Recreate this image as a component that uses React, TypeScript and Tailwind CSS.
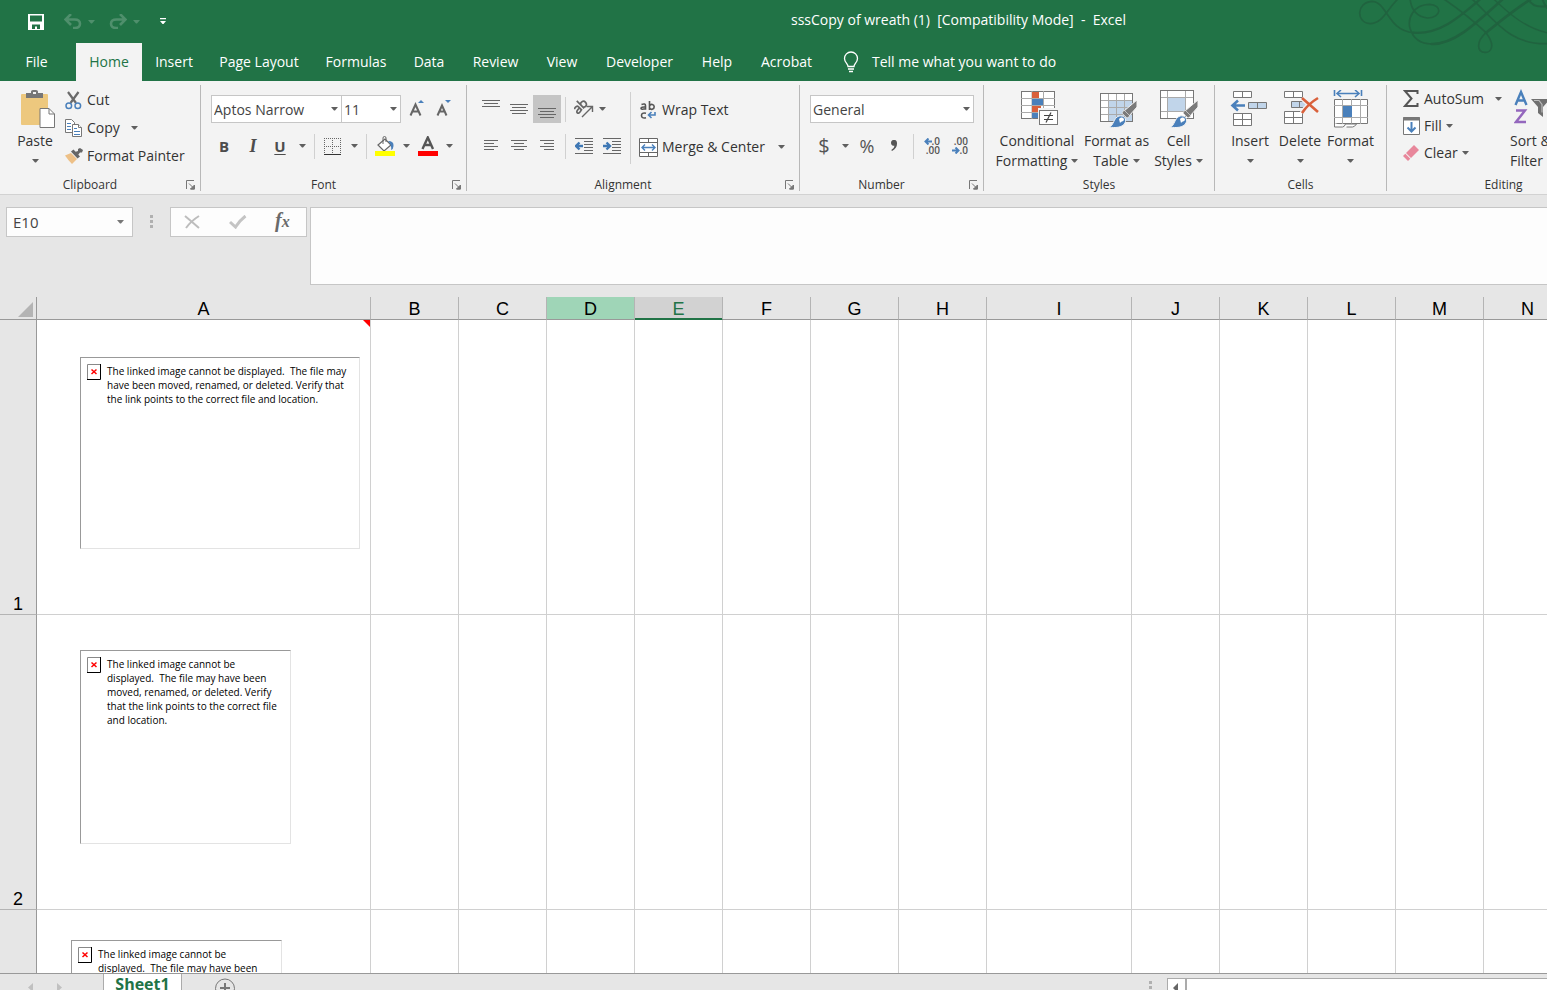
import type { ReactNode } from "react";

const SANS = "font-['Open_Sans','Noto_Sans',sans-serif]";

function Caret({ className = "text-[#5f5f5f]" }: { className?: string }) {
  return (
    <svg className={className} width="7" height="4" viewBox="0 0 7 4" aria-hidden="true">
      <path d="M0 0h7L4 3.5H3z" fill="currentColor" />
    </svg>
  );
}

function IconButton({ label, className, children }: { label: string; className: string; children: ReactNode }) {
  return (
    <button type="button" aria-label={label} className={"flex h-7 shrink-0 items-center justify-center " + className}>
      {children}
    </button>
  );
}

function Divider({ className = "" }: { className?: string }) {
  return <div className={"h-[25px] w-px shrink-0 bg-[#d0d0d0] " + className} />;
}

function Group({ title, width, launcher = false, children }: { title: string; width: string; launcher?: boolean; children: ReactNode }) {
  return (
    <section aria-label={title} className={"flex h-[106px] shrink-0 flex-col border-r border-[#b8b8b8] " + width}>
      <div className="h-[91px] shrink-0">{children}</div>
      <div className="flex h-[18px] shrink-0 items-center">
        <span className={"flex-1 text-center text-xs leading-[18px] text-[#333] " + (launcher ? "pr-[5px]" : "")}>{title}</span>
        {launcher && (
          <button type="button" aria-label={title + " settings"} className="mr-[4px]">
            <svg width="11" height="10" viewBox="0 0 11 10" fill="none" stroke="#777">
              <path d="M1.5 9V.5H9M4 3.5l4 4M9.5 5v4H5.5" />
              <path d="M9.5 5v4h-4z" fill="#777" />
            </svg>
          </button>
        )}
      </div>
    </section>
  );
}

function Dropdown({ label, value, width, height = "h-7" }: { label: string; value: string; width: string; height?: string }) {
  return (
    <label className={"relative flex shrink-0 items-center " + width + " " + height}>
      <select aria-label={label} className="h-full w-full appearance-none border border-[#c6c6c6] bg-white pl-[2px] pt-[2px] text-sm text-[#444] outline-none">
        <option>{value}</option>
      </select>
      <span className="pointer-events-none absolute right-[4px]">
        <Caret />
      </span>
    </label>
  );
}

function BigButton({ icon, lines, width, caret }: { icon: ReactNode; lines: string[]; width: string; caret: "inline" | "below" | "none" }) {
  return (
    <button type="button" className={"flex shrink-0 flex-col items-center pt-[4px] text-sm leading-5 text-[#333] " + width}>
      <span className="mb-[3px] flex h-[39px] items-center">{icon}</span>
      {lines.map((line, i) => (
        <span key={line} className="flex items-center gap-1 whitespace-nowrap">
          {line}
          {caret === "inline" && i === lines.length - 1 && <Caret />}
        </span>
      ))}
      {caret === "below" && (
        <span className="flex h-5 items-center">
          <Caret />
        </span>
      )}
    </button>
  );
}

function SmallButton({ icon, text, caret, height = "h-7", gap = "gap-1" }: { icon: ReactNode; text: string; caret?: string; height?: string; gap?: string }) {
  return (
    <button type="button" className={"flex items-center whitespace-nowrap text-sm text-[#333] " + height + " " + gap}>
      <span className="flex w-[18px] justify-center">{icon}</span>
      {text}
      {caret && (
        <span className={caret}>
          <Caret />
        </span>
      )}
    </button>
  );
}

function TextLines({ spans }: { spans: [number, number, number][] }) {
  return (
    <svg width="18" height="18" viewBox="0 0 18 18" stroke="#666" shapeRendering="crispEdges">
      {spans.map(([x1, x2, y]) => (
        <path key={y} d={`M${x1} ${y + 0.5}H${x2}`} />
      ))}
    </svg>
  );
}

function Indent({ right = false }: { right?: boolean }) {
  return (
    <svg width="18" height="18" viewBox="0 0 18 18" stroke="#666">
      <path d="M0 1.5h18M9 4.5h9M9 7.5h9M9 10.5h9M9 13.5h9M0 16.5h18" shapeRendering="crispEdges" />
      <path
        d={right ? "M0 9h6M3.5 5.5L7 9l-3.5 3.5" : "M8 9H2M4.500 5.500L1 9l3.500 3.500"}
        stroke="#3f78b5"
        strokeWidth="2.400"
        fill="none"
      />
    </svg>
  );
}

function Brush() {
  return (
    <>
      <path d="M38 10v7l-8 9-5-5z" fill="#7a7a7a" stroke="#f3f3f3" />
      <path d="M25 20l6 6-3 2-5-5z" fill="#7a7a7a" stroke="#f3f3f3" strokeWidth=".6" />
      <path d="M10 37c5-1 4-9 10-11 5-1 8 3 6 7-3 5-10 5-16 4z" fill="#4a80bb" stroke="#f3f3f3" />
      <path d="M20 29c3-3 5-1 5 1-1 2-3 1-4 3" fill="#fff" />
    </>
  );
}

const pasteIcon = (
  <svg width="42" height="38" viewBox="-6 0 42 38">
    <rect x="1" y="4" width="27" height="31" rx="1" fill="#edc87e" />
    <path d="M6 8V3h5V1.500Q11 0 13 0h3q2 0 2 1.500V3h5v5z" fill="#777" />
    <rect x="13" y="2" width="3" height="2" fill="#f3f3f3" />
    <path d="M20 18.500h9l5.500 5.500v13.500H20z" fill="#fff" stroke="#777" />
    <path d="M29 18.500V24h5.500" fill="none" stroke="#777" />
  </svg>
);

const cutIcon = (
  <svg width="19" height="19" viewBox="0 0 19 19" fill="none" className="shrink-0">
    <path d="M3 1l8 11M13.500 1l-8 11" stroke="#6a6a6a" strokeWidth="2.200" />
    <circle cx="3.800" cy="14.800" r="2.800" stroke="#4a80bb" strokeWidth="1.500" />
    <circle cx="12.800" cy="14.800" r="2.800" stroke="#4a80bb" strokeWidth="1.500" />
  </svg>
);

const copyIcon = (
  <svg width="18" height="19" viewBox="0 0 18 19" fill="#fff" stroke="#777">
    <path d="M.5.500h6l3 3v10h-9z" />
    <path d="M2 4.500h4M2 7.500h4M2 10.500h4" stroke="#4a80bb" />
    <path d="M7.500 5.500h6l3 3v9h-9z" />
    <path d="M13.500 5.500v3h3" />
    <path d="M9 9.500h3M9 12.500h6M9 15.500h6" stroke="#4a80bb" />
  </svg>
);

const painterIcon = (
  <svg width="18" height="16" viewBox="0 0 18 16">
    <path d="M0 7.500l6-2.500 6 6-5 5q-4-4-7-8.500z" fill="#edc087" />
    <path d="M6 3.500l2.500-2 6.500 7-2.500 2z" fill="#666" />
    <path d="M10 4l3-1V1l2-1 3 2-1 2.500h-2L13 7z" fill="#666" />
  </svg>
);

const conditionalIcon = (
  <svg width="44" height="35" viewBox="-6 0 44 35">
    <rect x=".5" y=".5" width="33" height="27" fill="#fff" stroke="#777" />
    <path d="M11 0v28M22.500 0v28M0 7.500h34M0 14.500h34M0 21.500h34" stroke="#aaa" />
    <path d="M11 1h7v6h-7zM11 15h9v6h-9z" fill="#d9603b" />
    <path d="M11 8h11v6H11zM11 22h6v5h-6z" fill="#4a80bb" />
    <rect x="17" y="17" width="21" height="18" fill="#f3f3f3" />
    <rect x="18.500" y="19.500" width="18" height="14" fill="#fff" stroke="#777" />
    <path d="M23 24.500h9M23 28.500h9M30 21.500l-5 10" stroke="#444" strokeWidth="1.200" />
  </svg>
);

const tableIcon = (
  <svg width="40" height="38" viewBox="-2 0 40 38">
    <rect x="1" y="3.500" width="32" height="28" fill="#fff" />
    <path d="M9 11h24v21H9z" fill="#c1d5ea" />
    <path d="M9.500 3v29M17.500 3v29M25.500 3v29M1 10.500h32M1 17.500h32M1 24.500h32" stroke="#aaa" />
    <rect x="1.500" y="3.500" width="32" height="28" fill="none" stroke="#777" />
    <Brush />
  </svg>
);

const cellStylesIcon = (
  <svg width="38" height="38" viewBox="0 0 38 38">
    <rect x=".5" y=".5" width="33" height="28" fill="#fff" />
    <path d="M7.500 7h18v14h-18z" fill="#c1d5ea" />
    <path d="M7.500 0v28M25.500 0v28M0 7.500h34M0 21.500h34" stroke="#aaa" />
    <rect x=".5" y=".5" width="33" height="28" fill="none" stroke="#777" />
    <Brush />
  </svg>
);

const insertIcon = (
  <svg width="40" height="38" viewBox="0 0 40 38" fill="#fff" stroke="#777">
    <path d="M3.500 1.500h18v6h-18zM12.500 1.500v6" />
    <path d="M18.500 12.500h18v6h-18z" fill="#c1d5ea" />
    <path d="M27.500 12.500v6" />
    <path d="M3.500 23.500h18v12h-18zM12.500 23.500v12M3.500 29.500h18" />
    <path d="M15 15.500H3M8 10.500l-5.500 5 5.500 5" stroke="#4a80bb" strokeWidth="2.600" fill="none" />
  </svg>
);

const deleteIcon = (
  <svg width="37" height="38" viewBox="-1 0 37 38" fill="#fff" stroke="#777">
    <path d="M1.500 1.500h18v6h-18zM10.500 1.500v6" />
    <path d="M8.500 11.500h12l3 3-3 3h-12z" fill="#c1d5ea" />
    <path d="M16.500 11.500v6" />
    <path d="M1.500 21.500h18v12h-18zM10.500 21.500v12M1.500 27.500h18" />
    <path d="M19 8l16 14M35 8q-10 6-16 15" stroke="#f3f3f3" strokeWidth="5" fill="none" />
    <path d="M19 8l16 14M35 8q-10 6-16 15" stroke="#d9603b" strokeWidth="2.600" fill="none" />
  </svg>
);

const formatIcon = (
  <svg width="36" height="38" viewBox="0 0 36 38" fill="none" stroke="#777">
    <path d="M1.500 0v6M28.500 0v6M5 3.500h20" stroke="#4a80bb" strokeWidth="1.600" />
    <path d="M8 0L4 3.500 8 7M22 0l4 3.500L22 7" stroke="#4a80bb" strokeWidth="1.600" />
    <path d="M1.500 9.500h33v24h-33z" fill="#fff" />
    <path d="M9.500 9v25M18.500 9v25M27.500 9v25M1 15.500h34M1 27.500h34" stroke="#aaa" />
    <path d="M10 16h9v11h-9z" fill="#4a80bb" stroke="none" />
    <path d="M1.500 33v4h8q2 0 3-3h11q-2 3-4 3h-6" fill="#fff" />
  </svg>
);

const tabs: [string, string][] = [
  ["Insert", "w-[64px]"],
  ["Page Layout", "w-[106px]"],
  ["Formulas", "w-[88px]"],
  ["Data", "w-[58px]"],
  ["Review", "w-[75px]"],
  ["View", "w-[58px]"],
  ["Developer", "w-[97px]"],
  ["Help", "w-[58px]"],
  ["Acrobat", "w-[81px]"],
];

function TitleBar() {
  return (
    <header className="relative flex h-[43px] shrink-0 items-center">
      <svg className="absolute right-0 top-0" width="189" height="54" viewBox="174 0 567 162" fill="none" stroke="#20633f" strokeLinecap="round" aria-hidden="true">
        <path d="M295 -4C262 25 250 70 210 71C168 68 168 8 215 4C262 4 262 92 340 98" strokeWidth="5" />
        <path d="M340 98C420 104 480 50 545 -6" strokeWidth="7" />
        <path d="M330 -4C334 32 350 50 382 54C425 54 428 14 388 13C340 14 322 55 330 85C340 118 365 132 395 132" strokeWidth="5" />
        <path d="M395 132C460 134 520 78 612 -6" strokeWidth="8" />
        <path d="M430 -4C480 30 520 62 558 98C590 140 570 158 555 157C530 156 528 125 558 98" strokeWidth="5" />
        <path d="M558 98C600 64 640 30 695 -4" strokeWidth="8" />
        <path d="M515 -4C590 66 630 134 741 131" strokeWidth="5" />
        <path d="M580 -4C630 44 680 86 745 99" strokeWidth="4" />
        <path d="M685 -2Q700 26 741 18M728 0Q733 14 741 24" strokeWidth="6" />
      </svg>
      <div className="flex w-[180px] shrink-0 items-center">
        <button type="button" aria-label="Save" className="ml-[28px]">
          <svg width="16" height="16" viewBox="0 0 16 16">
            <path fillRule="evenodd" d="M0 0h16v16H0zM2 1.500v6h12v-6zM4 10.500V15h3v-2.500h2V15h3v-4.500z" fill="#fff" />
          </svg>
        </button>
        <button type="button" aria-label="Undo" className="ml-5 flex items-center gap-[6px]">
          <svg width="18" height="15" viewBox="0 0 18 15" fill="none" stroke="#4f8f6c" strokeWidth="2.600">
            <path d="M1.500 5.500h9q5.500 0 5.500 4.300T10.500 14H9M7 0L1.500 5.500 7 11" />
          </svg>
          <Caret className="text-[#4f8f6c]" />
        </button>
        <button type="button" aria-label="Redo" className="ml-[14px] flex items-center gap-[6px]">
          <svg width="18" height="15" viewBox="0 0 18 15" fill="none" stroke="#4f8f6c" strokeWidth="2.600">
            <path d="M16.500 5.500h-9Q2 5.500 2 9.800T7.500 14H9M11 0l5.500 5.500L11 11" />
          </svg>
          <Caret className="text-[#4f8f6c]" />
        </button>
        <button type="button" aria-label="Customize Quick Access Toolbar" className="ml-5">
          <svg width="6" height="7" viewBox="0 0 6 7">
            <path d="M0 0h6v1.200H0zM0 3h6L3.500 6h-1z" fill="#fff" />
          </svg>
        </button>
      </div>
      <h1 className="flex-1 whitespace-pre pb-[3px] pl-[190px] text-center text-sm text-white">
        {"sssCopy of wreath (1)  [Compatibility Mode]  -  Excel"}
      </h1>
    </header>
  );
}

function TabBar() {
  return (
    <nav aria-label="Ribbon tabs" className="relative flex h-[38px] shrink-0 text-sm text-white">
      <button type="button" className="mr-[3px] w-[73px] shrink-0">File</button>
      <button type="button" className="w-[66px] shrink-0 bg-[#f3f3f3] text-[#217346]">Home</button>
      {tabs.map(([name, width]) => (
        <button key={name} type="button" className={"shrink-0 whitespace-nowrap " + width}>
          {name}
        </button>
      ))}
      <button type="button" className="ml-4 flex items-center gap-[13px] whitespace-nowrap">
        <svg width="16" height="22" viewBox="0 0 16 22" fill="none" stroke="#fff" strokeWidth="1.300">
          <path d="M5 15.500c0-3-3.500-4-3.500-8a6.500 6.500 0 0113 0c0 4-3.500 5-3.500 8zM5 18h6M6 20.500h4" />
        </svg>
        Tell me what you want to do
      </button>
    </nav>
  );
}

function Ribbon() {
  return (
    <div className="flex h-[114px] shrink-0 overflow-hidden border-b border-[#d2d2d2] bg-[#f3f3f3] pt-1">
      <Group title="Clipboard" width="w-[201px]" launcher>
        <div className="flex">
          <div className="ml-[9px] flex">
            <BigButton icon={pasteIcon} lines={["Paste"]} width="w-[52px]" caret="below" />
          </div>
          <div className="ml-1 flex flex-col items-start pt-px">
            <SmallButton icon={cutIcon} text="Cut" />
            <SmallButton icon={copyIcon} text="Copy" caret="ml-[7px]" />
            <SmallButton icon={painterIcon} text="Format Painter" />
          </div>
        </div>
      </Group>

      <Group title="Font" width="w-[266px]" launcher>
        <div className="flex flex-col gap-[9px] pl-[9px] pt-[10px]">
          <div className="flex">
            <div className="ml-px flex">
              <Dropdown label="Font name" value="Aptos Narrow" width="w-[131px]" />
              <div className="-ml-px flex">
                <Dropdown label="Font size" value="11" width="w-[60px]" />
              </div>
            </div>
            <IconButton label="Increase font size" className="ml-[3px] w-[26px]">
              <svg width="16" height="18" viewBox="0 0 16 18" aria-hidden="true">
                <path d="M1.500 15.500L6.500 4.500l5 11M3.500 11.500h6.500" fill="none" stroke="#666" strokeWidth="2" />
                <path d="M9 3l3-3 3 3z" fill="#4a80bb" />
              </svg>
            </IconButton>
            <IconButton label="Decrease font size" className="w-7">
              <svg width="16" height="18" viewBox="0 0 16 18" aria-hidden="true">
                <path d="M1.500 15.500L6 5.500l4.500 10M3.500 11.500H9" fill="none" stroke="#666" strokeWidth="2" />
                <path d="M9 0h6l-3 3z" fill="#4a80bb" />
              </svg>
            </IconButton>
          </div>
          <div className="flex items-center text-[#4d4d4d]">
            <IconButton label="Bold" className="w-7 text-[15px] font-bold">B</IconButton>
            <IconButton label="Italic" className="ml-px w-7 font-['Liberation_Serif',serif] text-lg font-bold italic">I</IconButton>
            <IconButton label="Underline" className="ml-px w-6 text-[15px] font-bold underline underline-offset-2">U</IconButton>
            <IconButton label="Underline options" className="w-5"><Caret /></IconButton>
            <Divider className="ml-[2px]" />
            <IconButton label="Borders" className="ml-[6px] w-[22px]">
              <svg width="17" height="17" viewBox="0 0 17 17" stroke="#666" shapeRendering="crispEdges">
                <path d="M0 .5h17M0 8.500h17M.5 0v17M8.500 0v17M16.500 0v17" strokeDasharray="1 1" />
                <path d="M0 16.500h17" stroke="#333" />
              </svg>
            </IconButton>
            <IconButton label="Border options" className="ml-px w-5"><Caret /></IconButton>
            <Divider className="ml-[2px]" />
            <IconButton label="Fill color" className="ml-[7px] w-[22px]">
              <svg width="20" height="20" viewBox="0 0 20 20">
                <path d="M3 9l7-6 6 6-7 6z" fill="#fff" stroke="#666" strokeWidth="1.200" />
                <path d="M8 8V2q0-1.500 1.500-1.500T11 2v4" fill="none" stroke="#666" />
                <path d="M13 5q6 0 5.500 5 0 3-2.500 4 1-5-3-9z" fill="#4a80bb" />
                <path d="M0 15h20v5H0z" fill="#ff0" />
              </svg>
            </IconButton>
            <IconButton label="Fill color options" className="ml-px w-[18px]"><Caret /></IconButton>
            <IconButton label="Font color" className="ml-px w-6">
              <svg width="20" height="20" viewBox="0 0 20 20">
                <path d="M4.500 13L9.800 1.500 15 13M6.500 9h6.500" fill="none" stroke="#555" strokeWidth="2.400" />
                <path d="M0 15h20v5H0z" fill="#f00" />
              </svg>
            </IconButton>
            <IconButton label="Font color options" className="w-[18px]"><Caret /></IconButton>
          </div>
        </div>
      </Group>

      <Group title="Alignment" width="w-[333px]" launcher>
        <div className="flex">
          <div className="flex flex-col gap-[9px] pl-[10px] pt-[10px]">
            <div className="flex items-center">
              <IconButton label="Top align" className="w-7"><TextLines spans={[[0, 18, 0], [2, 16, 3], [0, 18, 6]]} /></IconButton>
              <IconButton label="Middle align" className="w-7"><TextLines spans={[[0, 18, 4], [2, 16, 7], [0, 18, 10], [2, 16, 13]]} /></IconButton>
              <IconButton label="Bottom align" className="w-7 bg-[#c5c5c5]"><TextLines spans={[[0, 18, 8], [2, 16, 11], [0, 18, 14], [2, 16, 17]]} /></IconButton>
              <Divider className="ml-1" />
              <IconButton label="Orientation" className="ml-2 w-8 gap-[5px]">
                <svg width="20" height="20" viewBox="0 0 20 20" fill="none" stroke="#666" strokeWidth="1.700">
                  <g transform="rotate(-45 7 9)">
                    <path d="M1.500 5q4.500-1.500 4.500 1.500v5M6 8q-5-.5-5 1.800t5 .7M9 1v10.500M9 7q1-2.500 3.200-1.800t2 3-2 2.800-3.200-1.500" />
                  </g>
                  <path d="M8 18L18 8M12.500 7.500H18.500V13" strokeWidth="1.400" />
                </svg>
                <Caret />
              </IconButton>
            </div>
            <div className="flex items-center">
              <IconButton label="Align left" className="w-7"><TextLines spans={[[2, 16, 3], [2, 12, 6], [2, 16, 9], [2, 12, 12]]} /></IconButton>
              <IconButton label="Center" className="w-7"><TextLines spans={[[1, 17, 3], [4, 14, 6], [1, 17, 9], [4, 14, 12]]} /></IconButton>
              <IconButton label="Align right" className="w-7"><TextLines spans={[[2, 16, 3], [6, 16, 6], [2, 16, 9], [6, 16, 12]]} /></IconButton>
              <Divider className="ml-1" />
              <IconButton label="Decrease indent" className="ml-1 w-7"><Indent /></IconButton>
              <IconButton label="Increase indent" className="w-7"><Indent right /></IconButton>
            </div>
          </div>
          <div className="ml-[4px] mt-[7px] h-[72px] w-px bg-[#d0d0d0]" />
          <div className="flex flex-col items-start gap-[9px] pl-2 pt-[11px]">
            <SmallButton
              gap="gap-[5px]"
              text="Wrap Text"
              icon={
                <svg width="16" height="19" viewBox="0 0 16 19" fill="none" stroke="#555" strokeWidth="1.600">
                  <path d="M1.500 3.500q4-1.500 4 1.300v4M5.500 6Q1 5.700 1 7.300t4.500.5M9.500 0v9M9.500 5q1-2 2.800-1.500t1.900 2.300-1.900 2.400-2.800-1.500M6 12.300q-4.500-1-4.500 2.200t4.500 2.200" />
                  <path d="M15 11v3H9M11.500 11l-3 3 3 3" stroke="#4a80bb" />
                </svg>
              }
            />
            <SmallButton
              gap="gap-[5px]"
              text="Merge & Center"
              caret="ml-2"
              icon={
                <svg width="19" height="19" viewBox="0 0 19 19" fill="#fff" stroke="#666" className="shrink-0">
                  <path d="M.5.500h18v18H.5zM9.500 0v5M9.500 14v5M.5 4.500h18M.5 14.500h18" />
                  <path d="M3 9.500h13M6 6.500l-3 3 3 3M13 6.500l3 3-3 3" fill="none" stroke="#4a80bb" strokeWidth="1.400" />
                </svg>
              }
            />
          </div>
        </div>
      </Group>

      <Group title="Number" width="w-[184px]" launcher>
        <div className="flex flex-col gap-[9px] pl-[10px] pt-[10px]">
          <Dropdown label="Number format" value="General" width="w-[164px]" />
          <div className="flex items-center text-[#555]">
            <IconButton label="Accounting format" className="w-7 text-xl">$</IconButton>
            <IconButton label="Currency options" className="w-[14px]"><Caret /></IconButton>
            <IconButton label="Percent style" className="ml-px w-7 text-lg">%</IconButton>
            <IconButton label="Comma style" className="w-[26px]">
              <svg width="8" height="12" viewBox="0 0 8 12">
                <path d="M1 3a3 3 0 016-.3Q7.500 8 2 11l-.7-1Q4.500 8 4.500 5.800 1.200 6 1 3z" fill="#555" />
              </svg>
            </IconButton>
            <Divider className="ml-[6px]" />
            <IconButton label="Increase decimal" className="ml-[4px] w-7">
              <span className="flex w-[16px] flex-col items-end text-[10px] font-semibold leading-[9px]">
                <span className="flex items-center">
                  <svg width="8" height="7" viewBox="0 0 8 7" fill="none" stroke="#4a80bb" strokeWidth="2"><path d="M8 3.500H2M4.500.500l-3 3 3 3" /></svg>
                  .0
                </span>
                <span>.00</span>
              </span>
            </IconButton>
            <IconButton label="Decrease decimal" className="w-7">
              <span className="flex w-[16px] flex-col items-end text-[10px] font-semibold leading-[9px]">
                <span>.00</span>
                <span className="flex items-center">
                  <svg width="8" height="7" viewBox="0 0 8 7" fill="none" stroke="#4a80bb" strokeWidth="2"><path d="M0 3.500h6M3.500.500l3 3-3 3" /></svg>
                  .0
                </span>
              </span>
            </IconButton>
          </div>
        </div>
      </Group>

      <Group title="Styles" width="w-[231px]">
        <div className="flex pl-[9px]">
          <BigButton icon={conditionalIcon} lines={["Conditional", "Formatting"]} width="w-[88px]" caret="inline" />
          <BigButton icon={tableIcon} lines={["Format as", "Table"]} width="w-[71px]" caret="inline" />
          <BigButton icon={cellStylesIcon} lines={["Cell", "Styles"]} width="w-[53px]" caret="inline" />
        </div>
      </Group>

      <Group title="Cells" width="w-[172px]">
        <div className="flex pl-[10px]">
          <BigButton icon={insertIcon} lines={["Insert"]} width="w-[50px]" caret="below" />
          <BigButton icon={deleteIcon} lines={["Delete"]} width="w-[50px]" caret="below" />
          <BigButton icon={formatIcon} lines={["Format"]} width="w-[51px]" caret="below" />
        </div>
      </Group>

      <Group title="Editing" width="w-[234px]">
        <div className="flex">
          <div className="flex w-[118px] shrink-0 flex-col items-start pl-[15px]">
            <SmallButton
              height="h-[27px]"
              text="AutoSum"
              caret="ml-[7px]"
              icon={
                <svg width="16" height="17" viewBox="0 0 16 17" fill="none" stroke="#555" strokeWidth="2">
                  <path d="M14.500 4V1H2l6.500 7.500L2 16h12.500v-3" />
                </svg>
              }
            />
            <SmallButton
              height="h-[27px]"
              text="Fill"
              caret="ml-0"
              icon={
                <svg width="17" height="18" viewBox="0 0 17 18" fill="#fff" stroke="#777">
                  <path d="M.5.500h16v17H.5z" />
                  <path d="M0 2h17" strokeWidth="3" />
                  <path d="M8.500 5v9M4.500 10.500l4 4 4-4" fill="none" stroke="#4a80bb" strokeWidth="2" />
                </svg>
              }
            />
            <SmallButton
              height="h-[27px]"
              text="Clear"
              caret="ml-0"
              icon={
                <svg width="16" height="16" viewBox="0 0 16 16">
                  <path d="M11 0l5 5-8 8-5-5z" fill="#e8879b" />
                  <path d="M2.300 8.700l5 5L5 16 0 11z" fill="#e8879b" />
                </svg>
              }
            />
          </div>
          <button type="button" aria-label="Sort & Filter" className="flex shrink-0 flex-col items-start pl-[5px] pt-[4px] text-sm leading-5 text-[#333]">
            <svg className="mb-[3px] ml-[4px]" width="40" height="39" viewBox="0 0 40 39" fill="none" strokeWidth="2.400">
              <path d="M1.500 16L7 3l5.500 13M3.500 11.500h7" stroke="#4a80bb" />
              <path d="M2 21.500h9L2 33h10" stroke="#9467bd" />
              <path d="M17 10h19l-7 8v10l-5-4v-6z" fill="#6f6f6f" />
              <path d="M20 11.500h5l3 4v8" stroke="#bbb" strokeWidth="1.200" />
            </svg>
            <span>Sort &amp;</span>
            <span>Filter</span>
          </button>
        </div>
      </Group>
    </div>
  );
}

function FormulaBar() {
  return (
    <div className="flex h-[102px] shrink-0 items-start overflow-hidden pl-[6px] pt-3">
      <div className="flex h-[30px] w-[127px] shrink-0 items-center border border-[#c6c6c6] bg-[#fdfdfd]">
        <input aria-label="Name box" defaultValue="E10" className="w-[100px] bg-transparent pl-[6px] text-[15px] text-[#444] outline-none" />
        <button type="button" aria-label="Name list" className="ml-[10px]">
          <Caret className="text-[#777]" />
        </button>
      </div>
      <svg className="ml-[16px] mt-2 shrink-0" width="5" height="14" viewBox="0 0 5 14" fill="#b0b0b0">
        <path d="M1 0h3v3H1zM1 5h3v3H1zM1 10h3v3H1z" />
      </svg>
      <div className="ml-[16px] flex h-[30px] w-[137px] shrink-0 items-center border border-[#c6c6c6] bg-[#fdfdfd]">
        <button type="button" aria-label="Cancel" className="ml-[13px]">
          <svg width="17" height="14" viewBox="0 0 17 14" fill="none" stroke="#bdbdbd" strokeWidth="2">
            <path d="M1 1q6 5 14 12M15 1Q7 6 2 13" />
          </svg>
        </button>
        <button type="button" aria-label="Enter" className="ml-[28px]">
          <svg width="18" height="14" viewBox="0 0 18 14" fill="none" stroke="#c4c4c4" strokeWidth="3">
            <path d="M1 7l5.500 5Q10 6 16.500 1" />
          </svg>
        </button>
        <button type="button" aria-label="Insert function" className="ml-[28px] pb-[2px] font-['Liberation_Serif',serif] text-xl font-bold italic leading-6 text-[#6a6a6a]">
          f<span className="text-base">x</span>
        </button>
      </div>
      <textarea aria-label="Formula bar" className="ml-[3px] h-[78px] min-w-0 flex-1 resize-none border border-r-0 border-[#c6c6c6] bg-[#fdfdfd] p-2 text-sm outline-none" />
    </div>
  );
}

const columns: [string, string][] = [
  ["A", "w-[334px]"],
  ["B", "w-[88px]"],
  ["C", "w-[88px]"],
  ["D", "w-[88px]"],
  ["E", "w-[88px]"],
  ["F", "w-[88px]"],
  ["G", "w-[88px]"],
  ["H", "w-[88px]"],
  ["I", "w-[145px]"],
  ["J", "w-[88px]"],
  ["K", "w-[88px]"],
  ["L", "w-[88px]"],
  ["M", "w-[88px]"],
  ["N", "w-[88px]"],
];

function headerTone(name: string) {
  if (name === "D") return "bg-[#9fd5b7] text-black border-b-[#999]";
  if (name === "E") return "bg-[#d2d2d2] text-[#217346] border-b-[#217346] shadow-[inset_0_-1px_0_#217346]";
  return "text-black border-b-[#999]";
}

function BrokenImage({ text, className }: { text: string; className: string }) {
  return (
    <div className={"flex items-start border border-[#e3e3e3] border-l-[#999] border-t-[#999] bg-white pl-[6px] pt-[6px] " + className}>
      <svg className="shrink-0" width="14" height="16" viewBox="0 0 14 16" fill="none">
        <path d="M.5 15V.5H13" stroke="#888" />
        <path d="M13.500 0v15.500H0" stroke="#000" />
        <path d="M4.500 5.500l5 4.500M9.500 5.500l-5 4.500" stroke="#f00" strokeWidth="1.500" />
      </svg>
      <p className={"ml-[6px] whitespace-pre text-[10px] leading-[14px] text-black " + SANS}>{text}</p>
    </div>
  );
}

const rows = [
  {
    id: 1,
    pad: "pl-[43px] pt-[37px]",
    box: "w-[280px] h-[192px]",
    text: "The linked image cannot be displayed.  The file may\nhave been moved, renamed, or deleted. Verify that\nthe link points to the correct file and location.",
    note: true,
  },
  {
    id: 2,
    pad: "pl-[43px] pt-[35px]",
    box: "w-[211px] h-[194px]",
    text: "The linked image cannot be\ndisplayed.  The file may have been\nmoved, renamed, or deleted. Verify\nthat the link points to the correct file\nand location.",
    note: false,
  },
  {
    id: 3,
    pad: "pl-[34px] pt-[30px]",
    box: "w-[211px] h-[194px]",
    text: "The linked image cannot be\ndisplayed.  The file may have been\nmoved, renamed, or deleted. Verify\nthat the link points to the correct file\nand location.",
    note: false,
  },
];

function Sheet() {
  return (
    <main className="min-h-0 flex-1 overflow-hidden bg-white">
      <table className="w-[1572px] table-fixed border-separate border-spacing-0 font-['Liberation_Sans',sans-serif]">
        <colgroup>
          <col className="w-[37px]" />
          {columns.map(([name, width]) => (
            <col key={name} className={width} />
          ))}
        </colgroup>
        <thead>
          <tr className="h-[23px] bg-[#e6e6e6]">
            <th aria-label="Select all" className="border-b border-r border-[#999] p-0">
              <svg className="ml-[18px] mt-[2px]" width="15" height="15" viewBox="0 0 15 15">
                <path d="M15 0v15H0z" fill="#b4b4b4" />
              </svg>
            </th>
            {columns.map(([name]) => (
              <th key={name} scope="col" className={"border-b border-r border-r-[#b4b4b4] p-0 pt-[2px] text-lg font-normal leading-[20px] " + headerTone(name)}>
                {name}
              </th>
            ))}
          </tr>
        </thead>
        <tbody>
          {rows.map((row) => (
            <tr key={row.id} className="h-[295px]">
              <th scope="row" className="border-b border-r border-b-[#b4b4b4] border-r-[#999] bg-[#e6e6e6] p-0 align-bottom text-lg font-normal leading-[20px] text-black">
                {row.id}
              </th>
              <td className="relative border-b border-r border-[#d0d0d0] p-0 align-top">
                <div className={row.pad}>
                  <BrokenImage text={row.text} className={row.box} />
                </div>
                {row.note && (
                  <svg className="absolute right-0 top-0" width="7" height="7" viewBox="0 0 7 7" aria-hidden="true">
                    <path d="M0 0h7v7z" fill="#f00" />
                  </svg>
                )}
              </td>
              {columns.slice(1).map(([name]) => (
                <td key={name} className="border-b border-r border-[#d0d0d0] p-0" />
              ))}
            </tr>
          ))}
        </tbody>
      </table>
    </main>
  );
}

function SheetTabs() {
  return (
    <footer className="flex h-[17px] shrink-0 items-start overflow-hidden border-t border-[#999]">
      <button type="button" aria-label="Previous sheet" className="ml-[28px] mt-[9px]">
        <svg width="5" height="9" viewBox="0 0 5 9"><path d="M5 0v9L0 4.500z" fill="#c0c0c0" /></svg>
      </button>
      <button type="button" aria-label="Next sheet" className="ml-6 mt-[9px]">
        <svg width="5" height="9" viewBox="0 0 5 9"><path d="M0 0v9l5-4.500z" fill="#c0c0c0" /></svg>
      </button>
      <button type="button" className="ml-[41px] flex h-6 w-[79px] shrink-0 items-start justify-center border-x border-[#ababab] bg-white text-base font-bold leading-5 text-[#217346]">
        Sheet1
      </button>
      <button type="button" aria-label="New sheet" className="ml-[33px] mt-[4px]">
        <svg width="21" height="21" viewBox="0 0 21 21" fill="none" stroke="#777">
          <circle cx="10" cy="10.500" r="9.500" />
          <path d="M5 10h10M10 5v10" strokeWidth="2" />
        </svg>
      </button>
      <div className="flex-1" />
      <svg className="mt-[7px] shrink-0" width="3" height="13" viewBox="0 0 3 13" fill="#b0b0b0">
        <path d="M0 0h3v3H0zM0 5h3v3H0zM0 10h3v3H0z" />
      </svg>
      <div className="ml-[15px] mt-1 flex h-5 w-[380px] shrink-0 border border-r-0 border-[#ababab] bg-white">
        <button type="button" aria-label="Scroll left" className="flex h-full w-[19px] items-start border-r-2 border-[#ababab] pl-[5px] pt-1">
          <svg width="5" height="10" viewBox="0 0 5 10"><path d="M5 0v10L0 5z" fill="#666" /></svg>
        </button>
      </div>
    </footer>
  );
}

export default function App() {
  return (
    <div className={"flex h-screen w-full flex-col overflow-hidden bg-[#e6e6e6] " + SANS}>
      <div className="relative shrink-0 bg-[#217346]">
        <TitleBar />
        <TabBar />
      </div>
      <Ribbon />
      <FormulaBar />
      <Sheet />
      <SheetTabs />
    </div>
  );
}
